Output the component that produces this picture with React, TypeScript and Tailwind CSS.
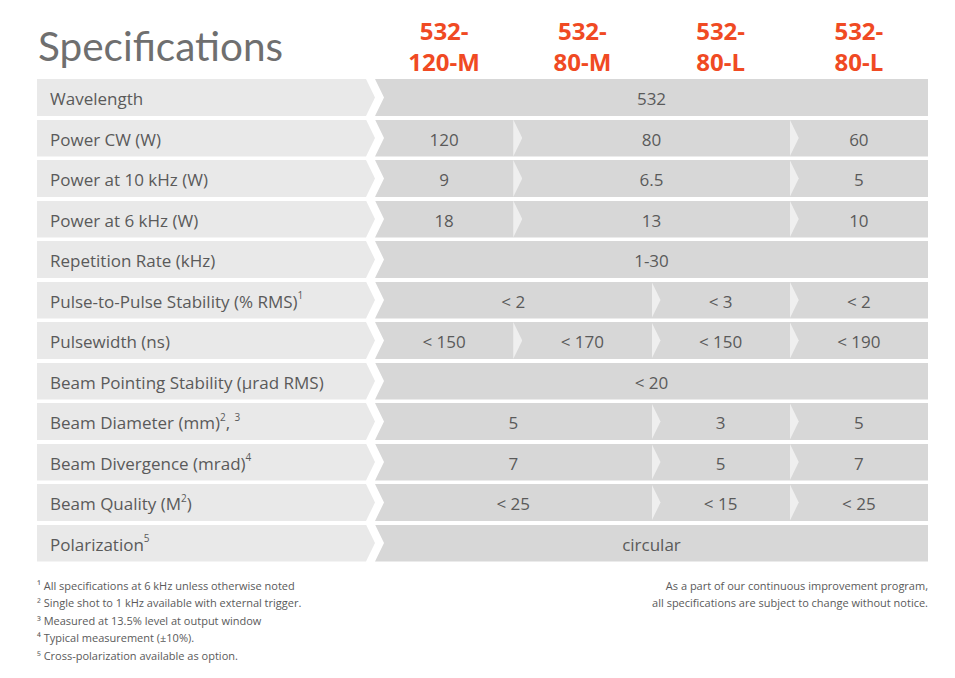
import React from "react";

type Cell = { v: React.ReactNode; span: number };
type Row = { label: React.ReactNode; cells: Cell[] };

const Sup = ({ children }: { children: React.ReactNode }) => (
  <sup className="text-[10px] relative top-[-2px] align-super leading-none">{children}</sup>
);

const rows: Row[] = [
  { label: "Wavelength", cells: [{ v: "532", span: 4 }] },
  { label: "Power CW (W)", cells: [{ v: "120", span: 1 }, { v: "80", span: 2 }, { v: "60", span: 1 }] },
  { label: "Power at 10 kHz (W)", cells: [{ v: "9", span: 1 }, { v: "6.5", span: 2 }, { v: "5", span: 1 }] },
  { label: "Power at 6 kHz (W)", cells: [{ v: "18", span: 1 }, { v: "13", span: 2 }, { v: "10", span: 1 }] },
  { label: "Repetition Rate (kHz)", cells: [{ v: "1-30", span: 4 }] },
  {
    label: (
      <>
        Pulse-to-Pulse Stability (% RMS)<Sup>1</Sup>
      </>
    ),
    cells: [{ v: "< 2", span: 2 }, { v: "< 3", span: 1 }, { v: "< 2", span: 1 }],
  },
  {
    label: "Pulsewidth (ns)",
    cells: [{ v: "< 150", span: 1 }, { v: "< 170", span: 1 }, { v: "< 150", span: 1 }, { v: "< 190", span: 1 }],
  },
  { label: "Beam Pointing Stability (µrad RMS)", cells: [{ v: "< 20", span: 4 }] },
  {
    label: (
      <>
        Beam Diameter (mm)<Sup>2</Sup>, <Sup>3</Sup>
      </>
    ),
    cells: [{ v: "5", span: 2 }, { v: "3", span: 1 }, { v: "5", span: 1 }],
  },
  {
    label: (
      <>
        Beam Divergence (mrad)<Sup>4</Sup>
      </>
    ),
    cells: [{ v: "7", span: 2 }, { v: "5", span: 1 }, { v: "7", span: 1 }],
  },
  {
    label: (
      <>
        Beam Quality (M<Sup>2</Sup>)
      </>
    ),
    cells: [{ v: "< 25", span: 2 }, { v: "< 15", span: 1 }, { v: "< 25", span: 1 }],
  },
  {
    label: (
      <>
        Polarization<Sup>5</Sup>
      </>
    ),
    cells: [{ v: "circular", span: 4 }],
  },
];

const spanClass: Record<number, string> = {
  1: "col-span-1",
  2: "col-span-2",
  3: "col-span-3",
  4: "col-span-4",
};

const models = [
  ["532-", "120-M"],
  ["532-", "80-M"],
  ["532-", "80-L"],
  ["532-", "80-L"],
];

export default function App() {
  return (
    <div
      className="w-[955px] h-[678px] bg-white text-[#5a5a5a] pl-[37px] pr-[27px]"
      style={{ fontFamily: "'Open Sans', 'Noto Sans', sans-serif" }}
    >
      {/* Header */}
      <div className="flex h-[79px]">
        <div className="w-[338px] pt-[26px]">
          <h1
            className="text-[40.5px] leading-none text-[#6f6f6f] pl-[1px]"
            style={{ fontFamily: "Lato, 'Open Sans', sans-serif" }}
          >
            Specifications
          </h1>
        </div>
        <div className="grid grid-cols-4 flex-1 pt-[15px]">
          {models.map((m, i) => (
            <div key={i} className="text-center text-[#f04a23] font-bold text-[24px] leading-[31px]">
              <div>{m[0]}</div>
              <div>{m[1]}</div>
            </div>
          ))}
        </div>
      </div>

      {/* Table */}
      <div className="flex flex-col gap-[3.5px]">
        {rows.map((r, i) => (
          <div key={i} className="flex h-[37px]">
            <div
              className="w-[338px] bg-[#e9e9e9] flex items-center pl-[13px] pt-[3px] text-[17px] text-[#5a5a5a] whitespace-nowrap"
              style={{ clipPath: "polygon(0 0, calc(100% - 9px) 0, 100% 50%, calc(100% - 9px) 100%, 0 100%)" }}
            >
              <span>{r.label}</span>
            </div>
            <div
              className="flex-1 bg-[#d7d7d7] grid grid-cols-4"
              style={{ clipPath: "polygon(0 0, 100% 0, 100% 100%, 0 100%, 9px 50%)" }}
            >
              {r.cells.map((c, j) => (
                <div
                  key={j}
                  className={`${spanClass[c.span]} relative flex items-center justify-center pt-[3px] text-[17px] text-[#5a5a5a]`}
                >
                  {j > 0 && (
                    <div
                      className="absolute left-0 top-0 h-full w-[9px] bg-[#efefef]"
                      style={{ clipPath: "polygon(0 0, 100% 50%, 0 100%)" }}
                    />
                  )}
                  <span>{c.v}</span>
                </div>
              ))}
            </div>
          </div>
        ))}
      </div>

      {/* Footnotes */}
      <div className="flex justify-between mt-[15px] text-[11px] leading-[17.6px] text-[#5a5a5a]">
        <div>
          <div>¹ All specifications at 6 kHz unless otherwise noted</div>
          <div>² Single shot to 1 kHz available with external trigger.</div>
          <div>³ Measured at 13.5% level at output window</div>
          <div>⁴ Typical measurement (±10%).</div>
          <div>⁵ Cross-polarization available as option.</div>
        </div>
        <div className="text-right">
          <div>As a part of our continuous improvement program,</div>
          <div>all specifications are subject to change without notice.</div>
        </div>
      </div>
    </div>
  );
}
